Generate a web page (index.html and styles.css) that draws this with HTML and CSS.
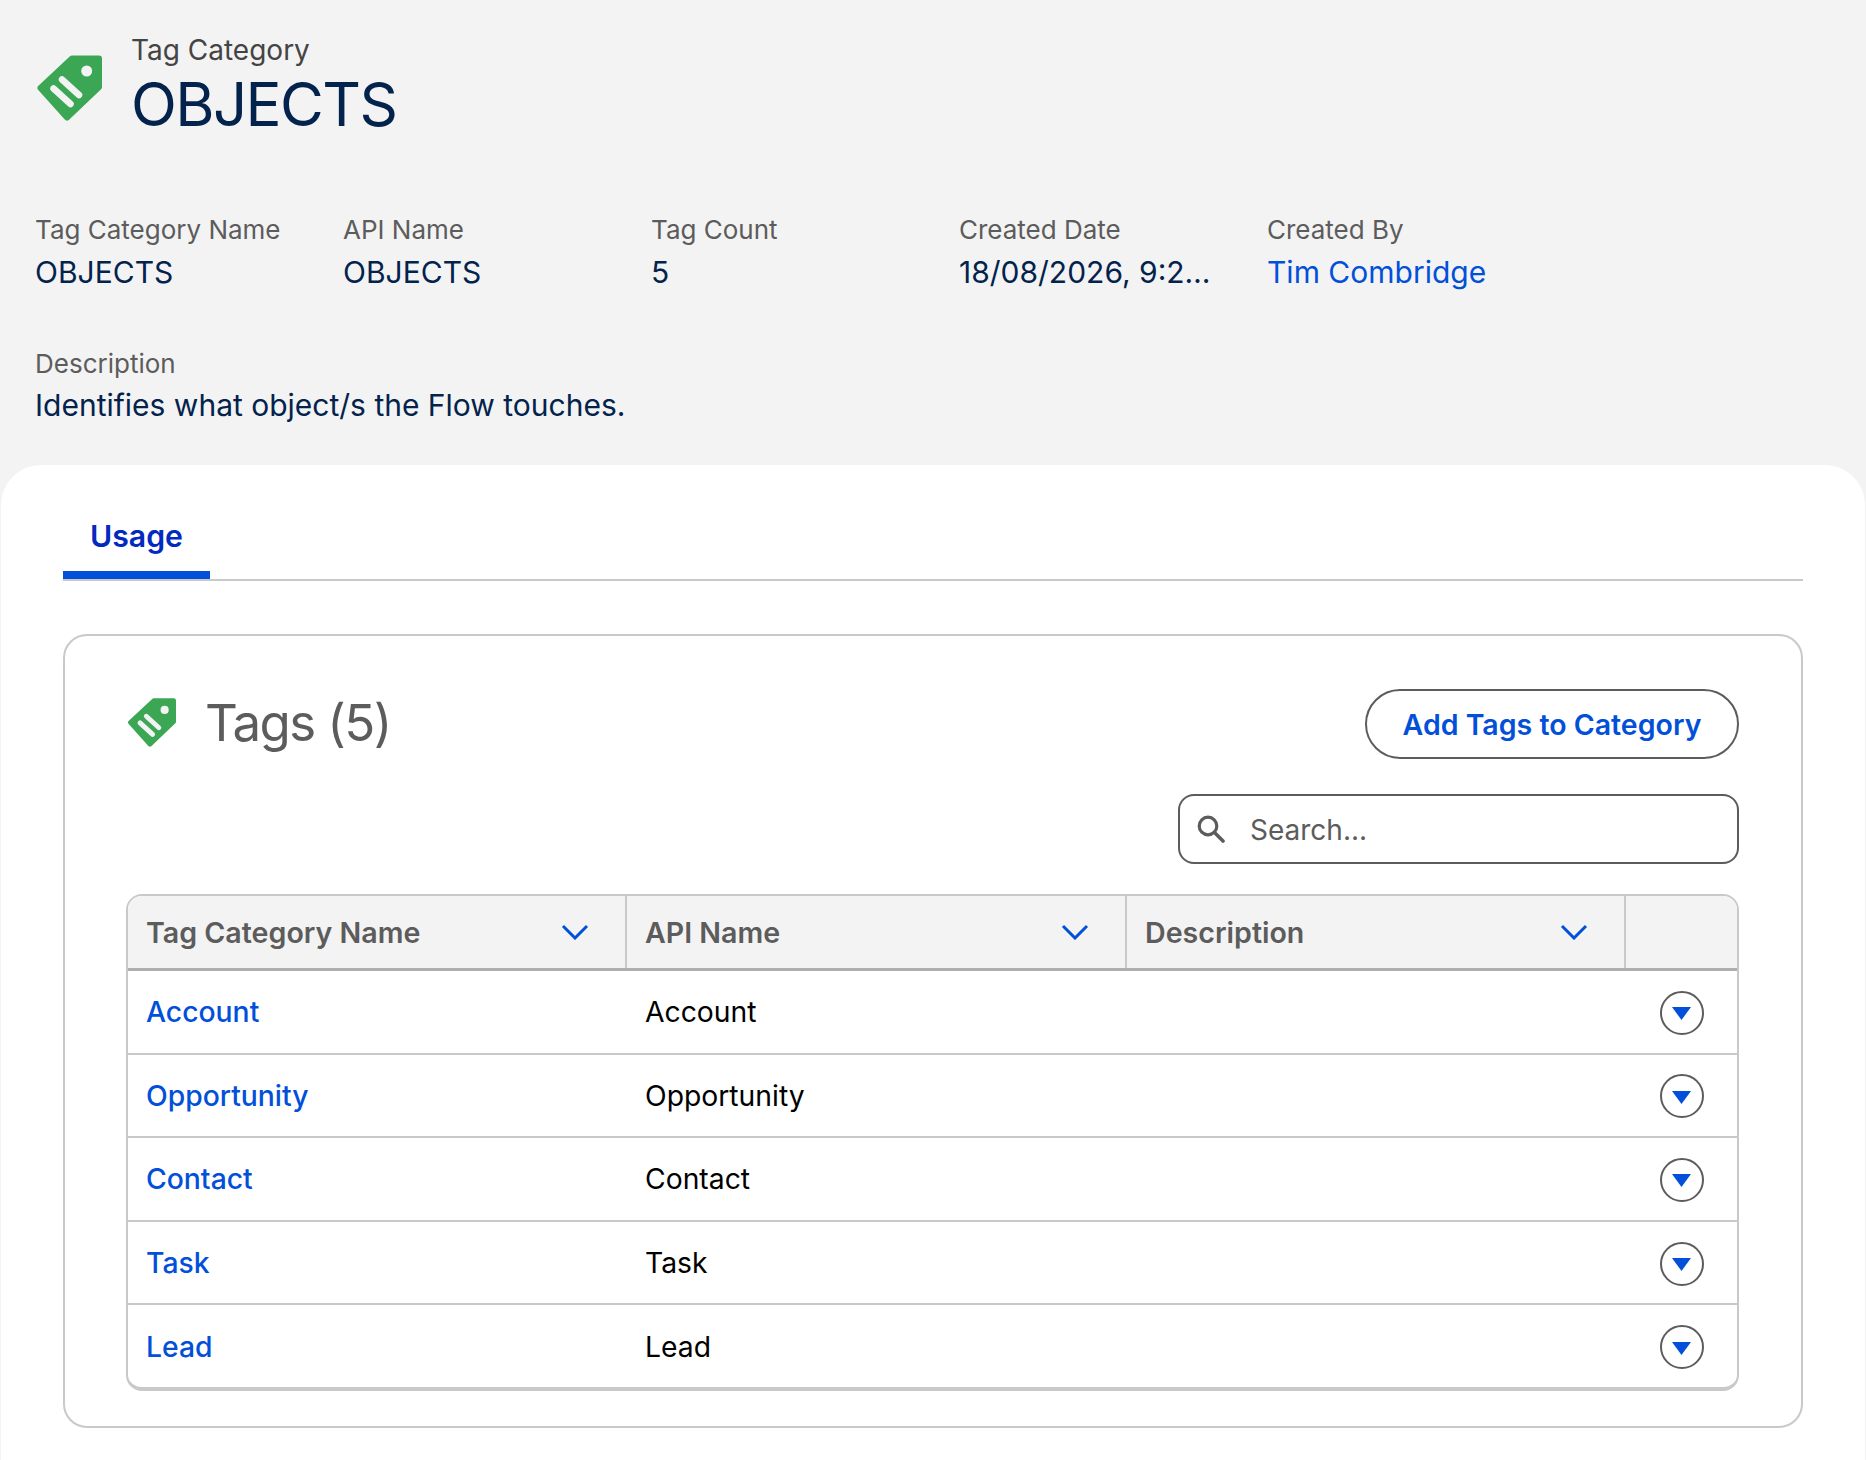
FILE: index.html
```html
<!DOCTYPE html>
<html lang="en">
<head>
  <meta charset="UTF-8" />
  <meta name="viewport" content="width=device-width, initial-scale=1.0"/>
  <title>Tag Category - OBJECTS</title>
  <link rel="stylesheet" href="styles.css">
</head>
<body>
  <svg class="defs" width="0" height="0">
    <symbol id="tag-icon" viewBox="0 0 66 66">
      <polygon points="4.5,33 36,3.5 63,3.5 63,32 31,62.5" fill="#3ba755" stroke="#3ba755" stroke-width="6" stroke-linejoin="round"/>
      <circle cx="50.7" cy="16" r="5.5" fill="#f3f3f3"/>
      <path d="M26 24.5 L43 40 M17.5 33.5 L34.5 49" stroke="#f3f3f3" stroke-width="6.5" stroke-linecap="round" fill="none"/>
    </symbol>
    <symbol id="chevron" viewBox="0 0 28 16">
      <path d="M2 2 L14 14 L26 2" stroke="#0250d9" stroke-width="3" fill="none"/>
    </symbol>
    <symbol id="caret" viewBox="0 0 19 13">
      <polygon points="0,0 19,0 9.5,13" fill="#0250d9"/>
    </symbol>
  </svg>

  <div class="page-header">
    <svg class="header-icon"><use href="#tag-icon"/></svg>
    <div>
      <div class="eyebrow">Tag Category</div>
      <h1 class="title">OBJECTS</h1>
    </div>
  </div>

  <div class="fields">
    <div class="field">
      <div class="field-label">Tag Category Name</div>
      <div class="field-value">OBJECTS</div>
    </div>
    <div class="field">
      <div class="field-label">API Name</div>
      <div class="field-value">OBJECTS</div>
    </div>
    <div class="field">
      <div class="field-label">Tag Count</div>
      <div class="field-value">5</div>
    </div>
    <div class="field">
      <div class="field-label">Created Date</div>
      <div class="field-value truncate">18/08/2026, 9:25 AM</div>
    </div>
    <div class="field">
      <div class="field-label">Created By</div>
      <div class="field-value"><a class="link" href="#">Tim Combridge</a></div>
    </div>
  </div>

  <div class="description">
    <div class="field-label">Description</div>
    <div class="field-value">Identifies what object/s the Flow touches.</div>
  </div>

  <div class="main-card">
    <div class="tabs">
      <div class="tab active">Usage</div>
    </div>

    <div class="tags-card">
      <div class="tags-head">
        <div class="tags-title">
          <svg class="tags-icon"><use href="#tag-icon"/></svg>
          <h2>Tags (5)</h2>
        </div>
        <button class="add-button">Add Tags to Category</button>
      </div>

      <div class="search-row">
        <div class="search-box">
          <svg class="search-icon" viewBox="0 0 28 28">
            <circle cx="11" cy="11" r="8.8" stroke="#5c5c5c" stroke-width="3.2" fill="none"/>
            <path d="M17.5 17.5 L26 26" stroke="#5c5c5c" stroke-width="3.6" stroke-linecap="round"/>
          </svg>
          <span>Search...</span>
        </div>
      </div>

      <div class="table">
        <div class="table-row table-head">
          <div class="th">Tag Category Name<svg class="chevron"><use href="#chevron"/></svg></div>
          <div class="th">API Name<svg class="chevron"><use href="#chevron"/></svg></div>
          <div class="th">Description<svg class="chevron"><use href="#chevron"/></svg></div>
          <div class="th last"></div>
        </div>
        <div class="table-row">
          <div class="td"><a class="link" href="#">Account</a></div>
          <div class="td">Account</div>
          <div class="td"></div>
          <div class="td action"><span class="row-menu"><svg class="caret"><use href="#caret"/></svg></span></div>
        </div>
        <div class="table-row">
          <div class="td"><a class="link" href="#">Opportunity</a></div>
          <div class="td">Opportunity</div>
          <div class="td"></div>
          <div class="td action"><span class="row-menu"><svg class="caret"><use href="#caret"/></svg></span></div>
        </div>
        <div class="table-row">
          <div class="td"><a class="link" href="#">Contact</a></div>
          <div class="td">Contact</div>
          <div class="td"></div>
          <div class="td action"><span class="row-menu"><svg class="caret"><use href="#caret"/></svg></span></div>
        </div>
        <div class="table-row">
          <div class="td"><a class="link" href="#">Task</a></div>
          <div class="td">Task</div>
          <div class="td"></div>
          <div class="td action"><span class="row-menu"><svg class="caret"><use href="#caret"/></svg></span></div>
        </div>
        <div class="table-row">
          <div class="td"><a class="link" href="#">Lead</a></div>
          <div class="td">Lead</div>
          <div class="td"></div>
          <div class="td action"><span class="row-menu"><svg class="caret"><use href="#caret"/></svg></span></div>
        </div>
      </div>
    </div>
  </div>
</body>
</html>
```

FILE: styles.css
```css
body {
  font-family: Inter, "Liberation Sans", sans-serif;
  margin: 0;
  background-color: #f3f3f3;
  color: #03234d;
}
.defs {
  position: absolute;
}
.page-header {
  display: flex;
  align-items: center;
  gap: 29px;
  padding: 29px 35px 0 36px;
  height: 110px;
}
.header-icon {
  width: 66px;
  height: 66px;
  margin-top: 8px;
}
.eyebrow {
  font-size: 28px;
  line-height: 38px;
  margin-bottom: 2px;
  color: #444444;
}
.title {
  margin: 0;
  font-size: 60px;
  font-weight: 400;
  line-height: 66px;
  letter-spacing: -1.6px;
}
.fields {
  display: flex;
  padding: 73px 35px 0 35px;
}
.field {
  width: 308px;
  padding-right: 56px;
  box-sizing: border-box;
}
.field-label {
  font-size: 26px;
  line-height: 36px;
  color: #5c5c5c;
  white-space: nowrap;
}
.field-value {
  font-size: 30px;
  line-height: 48px;
}
.truncate {
  white-space: nowrap;
  overflow: hidden;
  text-overflow: ellipsis;
}
.link {
  color: #0250d9;
  text-decoration: none;
}
.description {
  padding: 50px 35px 0 35px;
}
.description .field-value {
  margin-top: -1px;
}
.main-card {
  background: white;
  margin: 36px 1px 0 1px;
  padding: 0 62px 33px 62px;
  border-radius: 40px 40px 0 0;
}
.tabs {
  display: flex;
  border-bottom: 2px solid #c9c9c9;
}
.tab {
  height: 114px;
  box-sizing: border-box;
  padding: 51px 27px 0 27px;
  font-size: 30.2px;
  line-height: 40px;
  font-weight: 600;
  color: #022ac0;
}
.tab.active {
  border-bottom: 8px solid #0250d9;
}
.tags-card {
  margin-top: 53px;
  height: 794px;
  box-sizing: border-box;
  border: 2px solid #c9c9c9;
  border-radius: 24px;
  padding: 53px 62px 0 61px;
}
.tags-head {
  display: flex;
  justify-content: space-between;
  align-items: center;
}
.tags-title {
  display: flex;
  align-items: center;
  gap: 29px;
  margin: 0 0 4px 1px;
}
.tags-icon {
  width: 49px;
  height: 49px;
}
.tags-title h2 {
  margin: 0;
  font-size: 51px;
  font-weight: 400;
  letter-spacing: -1.6px;
  color: #5c5c5c;
}
.add-button {
  width: 374px;
  height: 70px;
  border: 2px solid #5c5c5c;
  border-radius: 35px;
  background: white;
  color: #0250d9;
  font-family: inherit;
  font-size: 28.5px;
  font-weight: 600;
}
.search-row {
  display: flex;
  justify-content: flex-end;
  margin-top: 35px;
}
.search-box {
  width: 561px;
  height: 70px;
  box-sizing: border-box;
  border: 2px solid #5c5c5c;
  border-radius: 16px;
  background: white;
  display: flex;
  align-items: center;
  gap: 25px;
  padding: 2px 0 0 17px;
  font-size: 28px;
  color: #5c5c5c;
}
.search-icon {
  width: 28px;
  height: 28px;
  margin-top: -2px;
}
.table {
  margin-top: 30px;
  border: 2px solid #c9c9c9;
  border-bottom-width: 4px;
  border-radius: 16px;
  overflow: hidden;
}
.table-row {
  display: grid;
  grid-template-columns: 499px 500px 499px 1fr;
  height: 83.6px;
  box-sizing: border-box;
  border-bottom: 2px solid #c9c9c9;
}
.table-row:last-child {
  border-bottom: none;
  height: 82px;
}
.table-head {
  height: 75px;
  background: #f3f3f3;
  border-bottom: 3px solid #aeaeae;
}
.th {
  display: flex;
  align-items: center;
  justify-content: space-between;
  padding: 0 36px 0 18px;
  font-size: 28.6px;
  font-weight: 600;
  color: #5c5c5c;
  border-right: 2px solid #c9c9c9;
}
.th.last {
  border-right: none;
}
.chevron {
  width: 28px;
  height: 16px;
}
.td {
  display: flex;
  align-items: center;
  padding: 1px 18px 0 18px;
  font-size: 28.3px;
  color: black;
}
.td .link {
  font-weight: 500;
}
.action {
  padding: 2px 0 0 0;
  justify-content: center;
}
.row-menu {
  width: 44px;
  height: 44px;
  box-sizing: border-box;
  border: 2px solid #5c5c5c;
  border-radius: 50%;
  display: flex;
  align-items: center;
  justify-content: center;
}
.caret {
  width: 19px;
  height: 13px;
  margin-top: 2px;
}
```
